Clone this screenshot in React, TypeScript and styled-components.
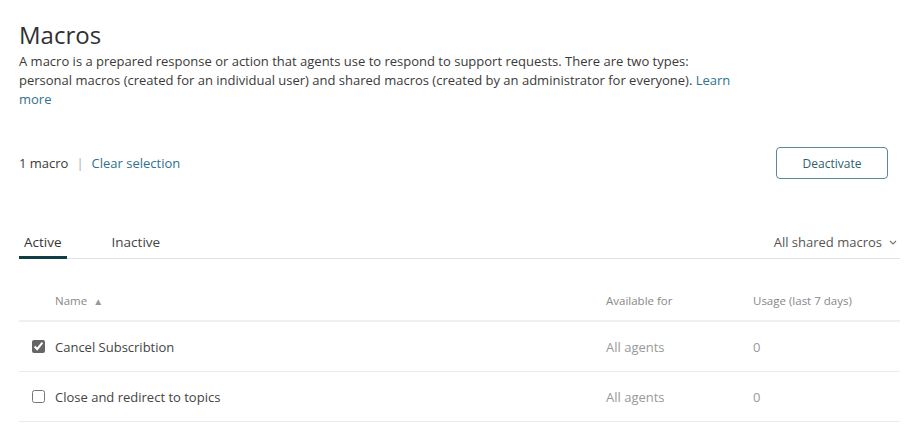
import React from 'react';
import styled, { createGlobalStyle } from 'styled-components';

const GlobalStyle = createGlobalStyle`
    body {
        margin: 0;
        background: #fff;
        font-family: "Open Sans", "Noto Sans", sans-serif;
        color: #333;
    }
`;

const Page = styled.div`
    padding: 18px 21px 0 19px;
`;

const Title = styled.h1`
    margin: 0;
    font-size: 24px;
    font-weight: 400;
    line-height: 34px;
    color: #2f3133;
`;

const Intro = styled.p`
    margin: 0;
    width: 724px;
    font-size: 13px;
    line-height: 19px;
    color: #3a3a3a;
`;

const TextLink = styled.a`
    color: #30728d;
    text-decoration: none;
    cursor: pointer;
`;

const SelectionBar = styled.div`
    display: flex;
    align-items: center;
    justify-content: space-between;
    margin-top: 38px;
    padding-right: 12px;
`;

const SelectionInfo = styled.div`
    font-size: 13px;
    color: #3a3a3a;
    display: flex;
    align-items: center;
    gap: 8px;
`;

const Divider = styled.span`
    color: #aaa;
`;

const Button = styled.button`
    width: 112px;
    height: 32px;
    border: 1px solid #5d8795;
    border-radius: 4px;
    background: #fff;
    color: #2f5f70;
    font-family: inherit;
    font-size: 12px;
    cursor: pointer;
`;

const TabBar = styled.div`
    display: flex;
    align-items: flex-end;
    margin-top: 54px;
    border-bottom: 1px solid #dfe3e5;
`;

const Tab = styled.div<{ $active?: boolean }>`
    padding: 0 5px 5px;
    margin-right: 40px;
    font-size: 13.5px;
    color: ${p => (p.$active ? '#333' : '#444')};
    border-bottom: 3px solid ${p => (p.$active ? '#0f3e45' : 'transparent')};
    margin-bottom: -1px;
`;

const Filter = styled.div`
    margin-left: auto;
    padding-bottom: 7px;
    font-size: 13px;
    color: #555;
    display: flex;
    align-items: center;
    gap: 7px;
    padding-right: 3px;
`;

const Table = styled.div`
    display: grid;
    grid-template-columns: 36px 551px 147px 1fr;
`;

const HeadCell = styled.div`
    height: 63px;
    display: flex;
    align-items: center;
    padding-top: 22px;
    box-sizing: border-box;
    font-size: 11.5px;
    color: #888;
    border-bottom: 2px solid #eef0f1;
`;

const Cell = styled.div<{ $muted?: boolean }>`
    height: 50px;
    display: flex;
    align-items: center;
    font-size: 13px;
    color: ${p => (p.$muted ? '#999' : '#444')};
    border-bottom: 1px solid #e9ecee;
    box-sizing: border-box;
`;

const CheckCell = styled(Cell)`
    padding-left: 13px;
`;

const Checkbox = styled.input`
    margin: 0;
    width: 13px;
    height: 13px;
    accent-color: #666;
`;

const SortArrow = styled.span`
    margin-left: 6px;
    font-size: 10px;
    color: #999;
`;

const rows = [
    { name: 'Cancel Subscribtion', available: 'All agents', usage: '0', checked: true },
    { name: 'Close and redirect to topics', available: 'All agents', usage: '0', checked: false },
];

const ChevronDown = () => (
    <svg width="8" height="5" viewBox="0 0 8 5">
        <path d="M1 1l3 3 3-3" fill="none" stroke="#777" strokeWidth="1.2" />
    </svg>
);

const App = () => {
    return (
        <Page>
            <GlobalStyle />
            <Title>Macros</Title>
            <Intro>
                A macro is a prepared response or action that agents use to respond to support requests. There are two types:
                personal macros (created for an individual user) and shared macros (created by an administrator for everyone).{' '}
                <TextLink>Learn more</TextLink>
            </Intro>
            <SelectionBar>
                <SelectionInfo>
                    1 macro <Divider>|</Divider> <TextLink>Clear selection</TextLink>
                </SelectionInfo>
                <Button>Deactivate</Button>
            </SelectionBar>
            <TabBar>
                <Tab $active>Active</Tab>
                <Tab>Inactive</Tab>
                <Filter>
                    All shared macros <ChevronDown />
                </Filter>
            </TabBar>
            <Table>
                <HeadCell />
                <HeadCell>
                    Name <SortArrow>▲</SortArrow>
                </HeadCell>
                <HeadCell>Available for</HeadCell>
                <HeadCell>Usage (last 7 days)</HeadCell>
                {rows.map(row => (
                    <React.Fragment key={row.name}>
                        <CheckCell>
                            <Checkbox type="checkbox" defaultChecked={row.checked} />
                        </CheckCell>
                        <Cell>{row.name}</Cell>
                        <Cell $muted>{row.available}</Cell>
                        <Cell $muted>{row.usage}</Cell>
                    </React.Fragment>
                ))}
            </Table>
        </Page>
    );
};

export default App;
